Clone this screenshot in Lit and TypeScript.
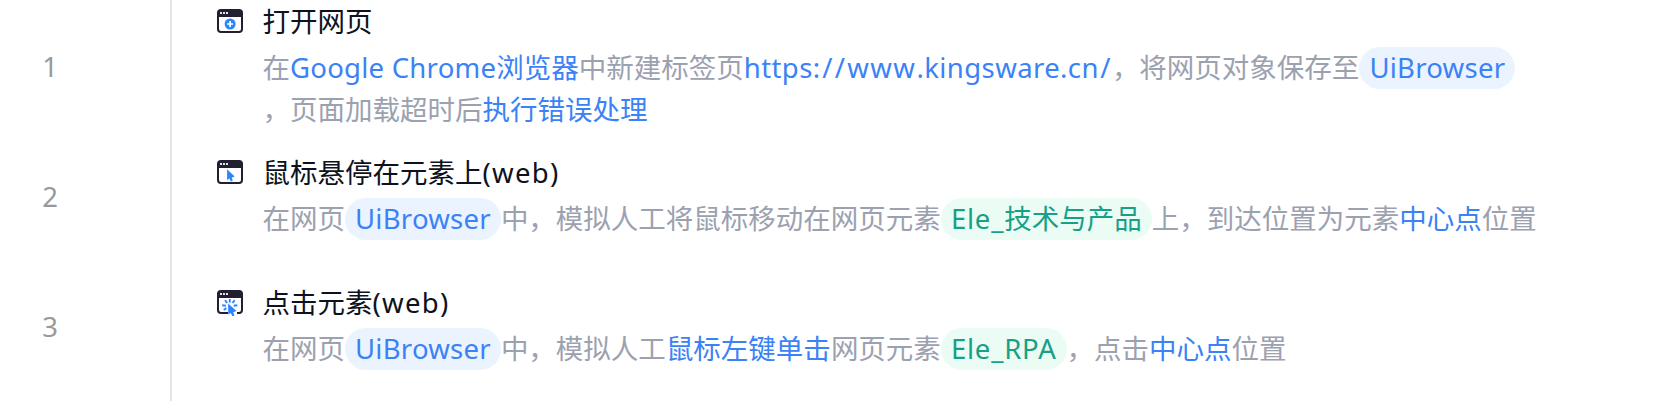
import {LitElement, html, css, svg} from "lit";
import {customElement} from "lit/decorators.js";

const windowIcon = (inner: unknown) => html`<svg class="ico" width="28" height="34" viewBox="0 0 28 34">
<path d="M1 12V29a3 3 0 0 0 3 3H22a3 3 0 0 0 3-3V12" fill="#fff" stroke="#211f30" stroke-width="2"/>
<path d="M0 17V13a4 4 0 0 1 4-4H22a4 4 0 0 1 4 4V17z" fill="#211f30"/>
<path d="M3 12h2v2h-2zM6 12h2v2h-2zM9 12h2v2h-2z" fill="#e4e4e8"/>${inner}</svg>`;

const plus = svg`<circle cx="13.100" cy="24" r="5.500" fill="#2b85ff"/><path d="M13.100 21v6M10.100 24h6" stroke="#fff" stroke-width="1.700"/>`;
const pointer = svg`<path d="M10.100 18.300V29L12.500 27.500L13.900 30.500L15.800 29.700L14.700 26.700L17.700 25.500z" fill="#2b85ff"/>`;
const click = svg`<path d="M11 30.500h9v3h-9z" fill="#fff"/>
<path d="M12.800 18v3.500M8 19.200l2.200 2.800M17.700 19.200l-2.200 2.800M5.200 24.200l3.600 .5M20.300 24.200l-3.600 .5M6.800 29l2.500-2" stroke="#2b85ff" stroke-width="1.900" fill="none"/>
<path d="M11.200 22.500V33.500L13.700 32L15.500 35.300L17.500 34.400L16.200 31.300L19.500 30z" fill="#2b85ff"/>`;

@customElement("app-root")
export class AppRoot extends LitElement {
  static styles = css`
    :host{display:block;height:401px;overflow:hidden;background:#fff;font-family:"Noto Sans","Noto Sans CJK SC",sans-serif;font-size:27.5px;color:#9ca1af}
    .row{display:grid;grid-template-columns:170px 1fr;height:130px}
    .first{height:151px}
    .num{display:flex;align-items:center;justify-content:center;width:100px;height:90px;color:#999}
    .first .num{height:132px}
    .body{border-left:2px solid #e4e5ea;padding-left:45px;display:grid;grid-template-columns:45.5px 1fr;grid-template-rows:47px;align-content:start}
    .ico{display:block;overflow:visible}
    .title{color:#0d1220;line-height:44px;white-space:nowrap}
    .desc{grid-column:2;line-height:42px;white-space:nowrap}
    .b{color:#3b82f6}
    .tag{display:inline-block;height:42px;vertical-align:top;padding:0 10px;border-radius:21px;color:#3b82f6;background:#ebf3ff}
    .g{color:#17a085;background:#ebfcf5}
    .s2{letter-spacing:.25px}
    .s4{letter-spacing:.4px}
    .s7{letter-spacing:.8px}
    .www{letter-spacing:1.5px}
    .slashes{letter-spacing:2.2px}
    .web{letter-spacing:1.3px}
    .end{padding:0 1.4px}
  `;
  render() {
    return html`
      <div class="row first"><div class="num">1</div><div class="body">${windowIcon(plus)}<div class="title">打开网页</div>
      <div class="desc">在<span class="b"><span class="s2">Google Chrome</span>浏览器</span>中新建标签页<span class="b"><span class="s4">https</span><span class="slashes">://</span><span class="www">www</span><span class="s4">.kingsware.cn</span><span class="end">/</span></span>，将网页对象保存至<span class="tag s2">UiBrowser</span><br>，页面加载超时后<span class="b">执行错误处理</span></div></div></div>
      <div class="row"><div class="num">2</div><div class="body">${windowIcon(pointer)}<div class="title">鼠标悬停在元素上<span class="web">(web)</span></div>
      <div class="desc">在网页<span class="tag s2">UiBrowser</span>中，模拟人工将鼠标移动在网页元素<span class="tag g"><span class="s7">Ele_</span>技术与产品</span>上，到达位置为元素<span class="b">中心点</span>位置</div></div></div>
      <div class="row"><div class="num">3</div><div class="body">${windowIcon(click)}<div class="title">点击元素<span class="web">(web)</span></div>
      <div class="desc">在网页<span class="tag s2">UiBrowser</span>中，模拟人工<span class="b">鼠标左键单击</span>网页元素<span class="tag g s7">Ele_RPA</span>，点击<span class="b">中心点</span>位置</div></div></div>`;
  }
}
